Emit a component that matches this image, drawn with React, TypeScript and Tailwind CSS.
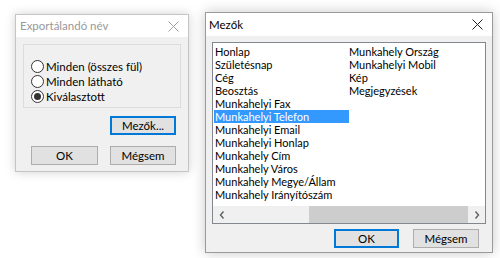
import React from "react";

const font = { fontFamily: 'Lato, "Noto Sans", "Liberation Sans", sans-serif' };

function CloseIcon({ color }: { color: string }) {
  return (
    <svg width="11" height="11" viewBox="0 0 11 11">
      <path d="M0.5 0.5 L10.5 10.5 M10.5 0.5 L0.5 10.5" stroke={color} strokeWidth="1" />
    </svg>
  );
}

function Radio({ label, checked }: { label: string; checked?: boolean }) {
  return (
    <div className="flex items-center h-[15px]">
      <span className="w-[13px] h-[13px] rounded-full border border-[#333] bg-white flex items-center justify-center">
        {checked && <span className="w-[7px] h-[7px] rounded-full bg-[#333]" />}
      </span>
      <span className="ml-[2px] text-[11.5px] text-black leading-none">{label}</span>
    </div>
  );
}

function Btn({ label, focus, w }: { label: string; focus?: boolean; w: string }) {
  return (
    <div
      className={`${w} h-[19px] bg-[#e1e1e1] flex items-center justify-center text-[11.5px] text-black leading-none ${
        focus ? "border-2 border-[#0078d7]" : "border border-[#adadad]"
      }`}
    >
      {label}
    </div>
  );
}

const col1 = [
  "Honlap",
  "Születésnap",
  "Cég",
  "Beosztás",
  "Munkahelyi Fax",
  "Munkahelyi Telefon",
  "Munkahelyi Email",
  "Munkahelyi Honlap",
  "Munkahely Cím",
  "Munkahely Város",
  "Munkahely Megye/Állam",
  "Munkahely Irányítószám",
];
const col2 = ["Munkahely Ország", "Munkahelyi Mobil", "Kép", "Megjegyzések"];

export default function App() {
  return (
    <div className="relative w-[500px] h-[258px] bg-white overflow-hidden" style={font}>
      {/* Export dialog (inactive) */}
      <div className="absolute left-[15px] top-[14px] w-[174px] h-[158px] border border-[#c4c4c4] bg-[#f0f0f0] flex flex-col shadow-[0_0_10px_rgba(0,0,0,0.18)]">
        <div className="h-[22px] bg-white flex items-center justify-between pl-[4px] pr-[9px]">
          <span className="text-[11.5px] text-[#999]">Exportálandó név</span>
          <CloseIcon color="#a0a0a0" />
        </div>
        <div className="mx-[7px] mt-[7px] h-[64px] border border-[#dcdcdc] flex flex-col justify-end pb-[3px] pl-[7px]">
          <Radio label="Minden (összes fül)" />
          <Radio label="Minden látható" />
          <Radio label="Kiválasztott" checked />
        </div>
        <div className="flex justify-end pr-[12px] mt-[8px]">
          <Btn label="Mezők..." focus w="w-[66px]" />
        </div>
        <div className="flex justify-between pl-[15px] pr-[12px] mt-[11px]">
          <Btn label="OK" w="w-[67px]" />
          <Btn label="Mégsem" w="w-[66px]" />
        </div>
      </div>

      {/* Fields dialog (active) */}
      <div className="absolute left-[205px] top-[12px] w-[288px] h-[241px] border border-[#9a9a9a] bg-[#f0f0f0] flex flex-col shadow-[0_0_12px_rgba(0,0,0,0.22)]">
        <div className="h-[23px] bg-white flex items-center justify-between pl-[3px] pr-[9px]">
          <span className="text-[11.5px] text-black">Mezők</span>
          <CloseIcon color="#222" />
        </div>
        <div className="mx-[6px] mt-[6px] h-[182px] border border-[#828790] bg-white flex flex-col">
          <div className="flex-1 flex pt-[2px] pl-[1px]">
            <div className="w-[135px] flex flex-col">
              {col1.map((t) => (
                <div
                  key={t}
                  className={`h-[13px] pl-[1px] text-[11px] leading-[13px] whitespace-nowrap ${
                    t === "Munkahelyi Telefon" ? "bg-[#3399ff] text-white" : "text-black"
                  }`}
                >
                  {t}
                </div>
              ))}
            </div>
            <div className="flex flex-col">
              {col2.map((t) => (
                <div key={t} className="h-[13px] text-[11px] leading-[13px] text-black whitespace-nowrap">
                  {t}
                </div>
              ))}
            </div>
          </div>
          <div className="h-[17px] bg-[#f0f0f0] flex items-center">
            <div className="w-[17px] flex justify-center">
              <svg width="6" height="8" viewBox="0 0 6 8">
                <path d="M4.5 0.5 L1.5 4 L4.5 7.5" stroke="#606060" strokeWidth="1.4" fill="none" />
              </svg>
            </div>
            <div className="flex-1 h-full flex">
              <div className="w-[79px]" />
              <div className="flex-1 bg-[#cdcdcd]" />
            </div>
            <div className="w-[17px] flex justify-center">
              <svg width="6" height="8" viewBox="0 0 6 8">
                <path d="M1.5 0.5 L4.5 4 L1.5 7.5" stroke="#606060" strokeWidth="1.4" fill="none" />
              </svg>
            </div>
          </div>
        </div>
        <div className="flex justify-end gap-[14px] pr-[13px] mt-[5px]">
          <Btn label="OK" focus w="w-[65px]" />
          <Btn label="Mégsem" w="w-[66px]" />
        </div>
      </div>
    </div>
  );
}
